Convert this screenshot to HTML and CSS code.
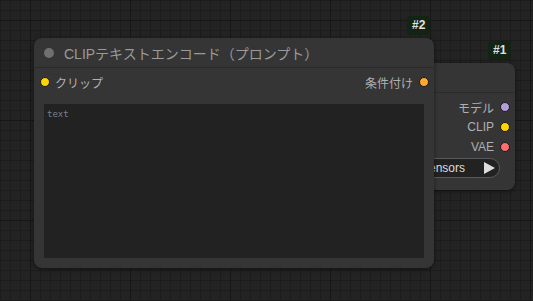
FILE: index.html
```html
<!DOCTYPE html>
<html>

<head>
    <title>ComfyUI</title>
    <link rel="stylesheet" href="styles.css">
</head>

<body>
    <div class="canvas">
        <!-- Load Checkpoint node, partly covered -->
        <div class="badge badge-1">#1</div>
        <div class="node node-1">
            <div class="node-title"></div>
            <div class="node-body">
                <div class="slot slot-out">
                    <span class="slot-label">モデル</span>
                    <span class="dot dot-model"></span>
                </div>
                <div class="slot slot-out">
                    <span class="slot-label">CLIP</span>
                    <span class="dot dot-clip"></span>
                </div>
                <div class="slot slot-out">
                    <span class="slot-label">VAE</span>
                    <span class="dot dot-vae"></span>
                </div>
                <div class="combo">
                    <span class="combo-name">ckpt_name</span>
                    <span class="combo-value">v1-5-pruned-emaonly.safetensors</span>
                    <span class="combo-arrow"></span>
                </div>
            </div>
        </div>

        <!-- CLIP Text Encode node -->
        <div class="badge badge-2">#2</div>
        <div class="node node-2">
            <div class="node-title">
                <span class="title-dot"></span>
                <span class="title-text">CLIPテキストエンコード（プロンプト）</span>
            </div>
            <div class="node-body">
                <div class="slot-row">
                    <div class="slot slot-in">
                        <span class="dot dot-clip"></span>
                        <span class="slot-label">クリップ</span>
                    </div>
                    <div class="slot slot-out">
                        <span class="slot-label">条件付け</span>
                        <span class="dot dot-cond"></span>
                    </div>
                </div>
                <div class="prompt">
                    <span class="placeholder">text</span>
                </div>
            </div>
        </div>
    </div>
</body>

</html>
```

FILE: styles.css
```css
body {
    margin: 0;
    padding: 0;
    background: #222;
    font-family: "Liberation Sans", "Noto Sans CJK JP", Arial, sans-serif;
    overflow: hidden;
}

.canvas {
    position: relative;
    width: 533px;
    height: 301px;
    background-color: #232323;
    background-image:
        linear-gradient(90deg, #171717 1px, transparent 1px),
        linear-gradient(0deg, #171717 1px, transparent 1px),
        linear-gradient(90deg, #1c1c1c 1px, transparent 1px),
        linear-gradient(0deg, #1c1c1c 1px, transparent 1px);
    background-size: 100px 100px, 100px 100px, 10px 10px, 10px 10px;
    background-position: 30px 0, 0 21px, 0 0, 0 1px;
}

.node {
    position: absolute;
    background: #353535;
    border-radius: 8px;
    box-shadow: 0 1px 4px rgba(0, 0, 0, 0.5);
}

.node-1 {
    left: 180px;
    top: 63px;
    width: 335px;
}

.node-2 {
    left: 34px;
    top: 38px;
    width: 400px;
}

.node-title {
    height: 29px;
    border-bottom: 1px solid #2b2b2b;
    display: flex;
    align-items: center;
    padding-left: 10px;
}

.title-dot {
    width: 10px;
    height: 10px;
    border-radius: 50%;
    background: #707070;
}

.title-text {
    margin-left: 10px;
    color: #9a9a9a;
    font-size: 14px;
}

.node-1 .node-body {
    padding: 4px 0 12px;
}

.node-2 .node-body {
    padding: 4px 10px 10px;
}

.slot-row {
    display: flex;
    justify-content: space-between;
    margin: 0 -5px 0 -4px;
}

.slot {
    display: flex;
    align-items: center;
    height: 20px;
    gap: 6px;
}

.slot-in {
    gap: 5px;
}

.node-1 .slot-out {
    justify-content: flex-end;
    padding-right: 5px;
}

.slot-label {
    color: #b0b0b0;
    font-size: 12px;
}

.dot {
    width: 8px;
    height: 8px;
    border-radius: 50%;
    border: 1px solid #1a1a1a;
}

.dot-clip {
    background: #ffd500;
}

.dot-cond {
    background: #ffa931;
}

.dot-model {
    background: #b39ddb;
}

.dot-vae {
    background: #ff6e6e;
}

.combo {
    display: flex;
    align-items: center;
    gap: 10px;
    height: 18px;
    margin: 1px 15px 0;
    padding: 0 4px 0 10px;
    background: #222;
    border: 1px solid #5a5a5a;
    border-radius: 10px;
}

.combo-name {
    color: #999;
    font-size: 12px;
    white-space: nowrap;
}

.combo-value {
    flex: 1;
    min-width: 0;
    overflow: hidden;
    text-align: right;
    color: #ddd;
    font-size: 12px;
    white-space: nowrap;
    margin-right: 9px;
}

.combo-arrow {
    flex-shrink: 0;
    width: 0;
    height: 0;
    border-top: 6px solid transparent;
    border-bottom: 6px solid transparent;
    border-left: 11px solid #ddd;
}

.prompt {
    margin-top: 12px;
    height: 154px;
    background: #222;
    padding: 2px 3px;
    box-sizing: border-box;
    line-height: 11px;
}

.placeholder {
    font-family: "DejaVu Sans Mono", monospace;
    font-size: 9px;
    color: #7a7f8a;
}

.badge {
    position: absolute;
    height: 19px;
    padding: 0 5px;
    background: #142414;
    border-radius: 4px;
    color: #e0e0e0;
    font-size: 12px;
    font-weight: bold;
    line-height: 19px;
}

.badge-1 {
    left: 488px;
    top: 41px;
}

.badge-2 {
    left: 407px;
    top: 16px;
}
```
